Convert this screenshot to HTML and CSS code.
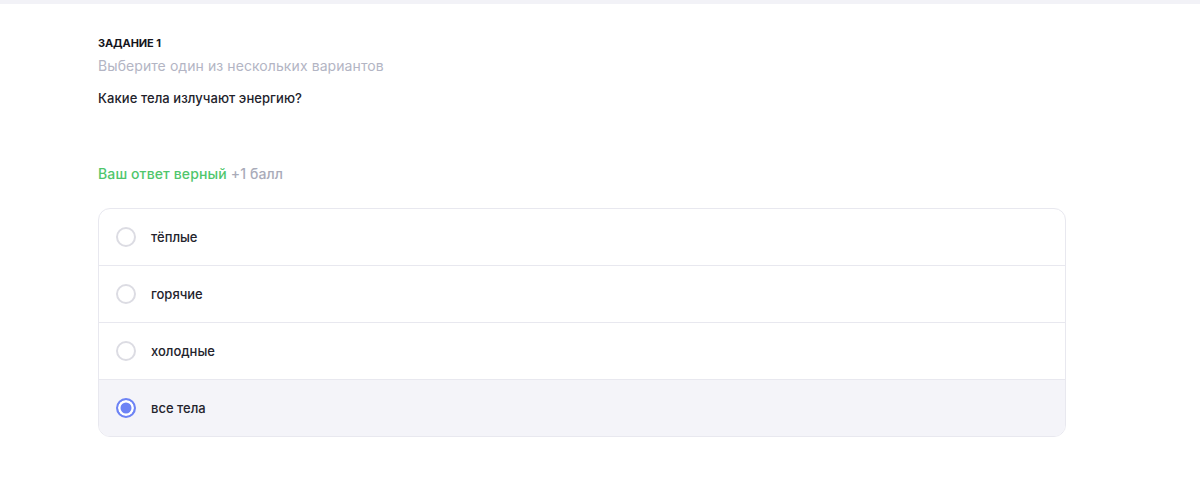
FILE: index.html
```html
<!DOCTYPE html>
<html lang="ru">
<head>
<meta charset="utf-8">
<link rel="stylesheet" href="styles.css">
</head>
<body>
<div class="topbar"></div>
<main class="task">
  <div class="task-label">ЗАДАНИЕ 1</div>
  <div class="task-hint">Выберите один из нескольких вариантов</div>
  <div class="task-question">Какие тела излучают энергию?</div>
  <div class="result"><span class="ok">Ваш ответ верный</span> <span class="score">+1 балл</span></div>
  <ul class="options">
    <li class="option"><span class="radio"></span><span class="opt-text">тёплые</span></li>
    <li class="option"><span class="radio"></span><span class="opt-text">горячие</span></li>
    <li class="option"><span class="radio"></span><span class="opt-text">холодные</span></li>
    <li class="option selected"><span class="radio"></span><span class="opt-text">все тела</span></li>
  </ul>
</main>
</body>
</html>
```
FILE: styles.css
```css
* { box-sizing: border-box; }
html, body { margin: 0; padding: 0; background: #fff; }
body { font-family: Inter, "Noto Sans", sans-serif; color: #1d1d26; }
.topbar { height: 4px; background: #f2f2f7; }
.task { padding: 0 134px 0 98px; width: 1200px; }
.task-label { margin-top: 32px; font-size: 11px; font-weight: 700; line-height: 14px; letter-spacing: -0.1px; color: #15151c; }
.task-hint { margin-top: 6px; font-size: 14px; line-height: 20px; letter-spacing: 0.08px; color: #b3b5c4; }
.task-question { margin-top: 13px; font-size: 13px; line-height: 18px; font-weight: 500; letter-spacing: 0.07px; color: #22222b; }
.result { margin-top: 57px; font-size: 14px; line-height: 20px; font-weight: 500; letter-spacing: 0.12px; }
.ok { color: #4fc66c; }
.score { color: #a9abb9; }
.options { list-style: none; margin: 24px 0 0; padding: 0; border: 1px solid #e8e8ef; border-radius: 12px; overflow: hidden; width: 968px; }
.option { display: flex; align-items: center; height: 57px; padding-left: 17px; border-top: 1px solid #e8e8ef; }
.option:first-child { border-top: none; height: 56px; }
.option.selected { background: #f4f4f9; }
.radio { width: 20px; height: 20px; border-radius: 50%; border: 2px solid #dcdce3; background: #fff; flex: none; }
.selected .radio { border: 2px solid #6d83f5; background: #6d83f5; box-shadow: inset 0 0 0 2.5px #fff; }
.opt-text { margin-left: 15px; font-size: 13px; font-weight: 500; color: #23232c; }
```
